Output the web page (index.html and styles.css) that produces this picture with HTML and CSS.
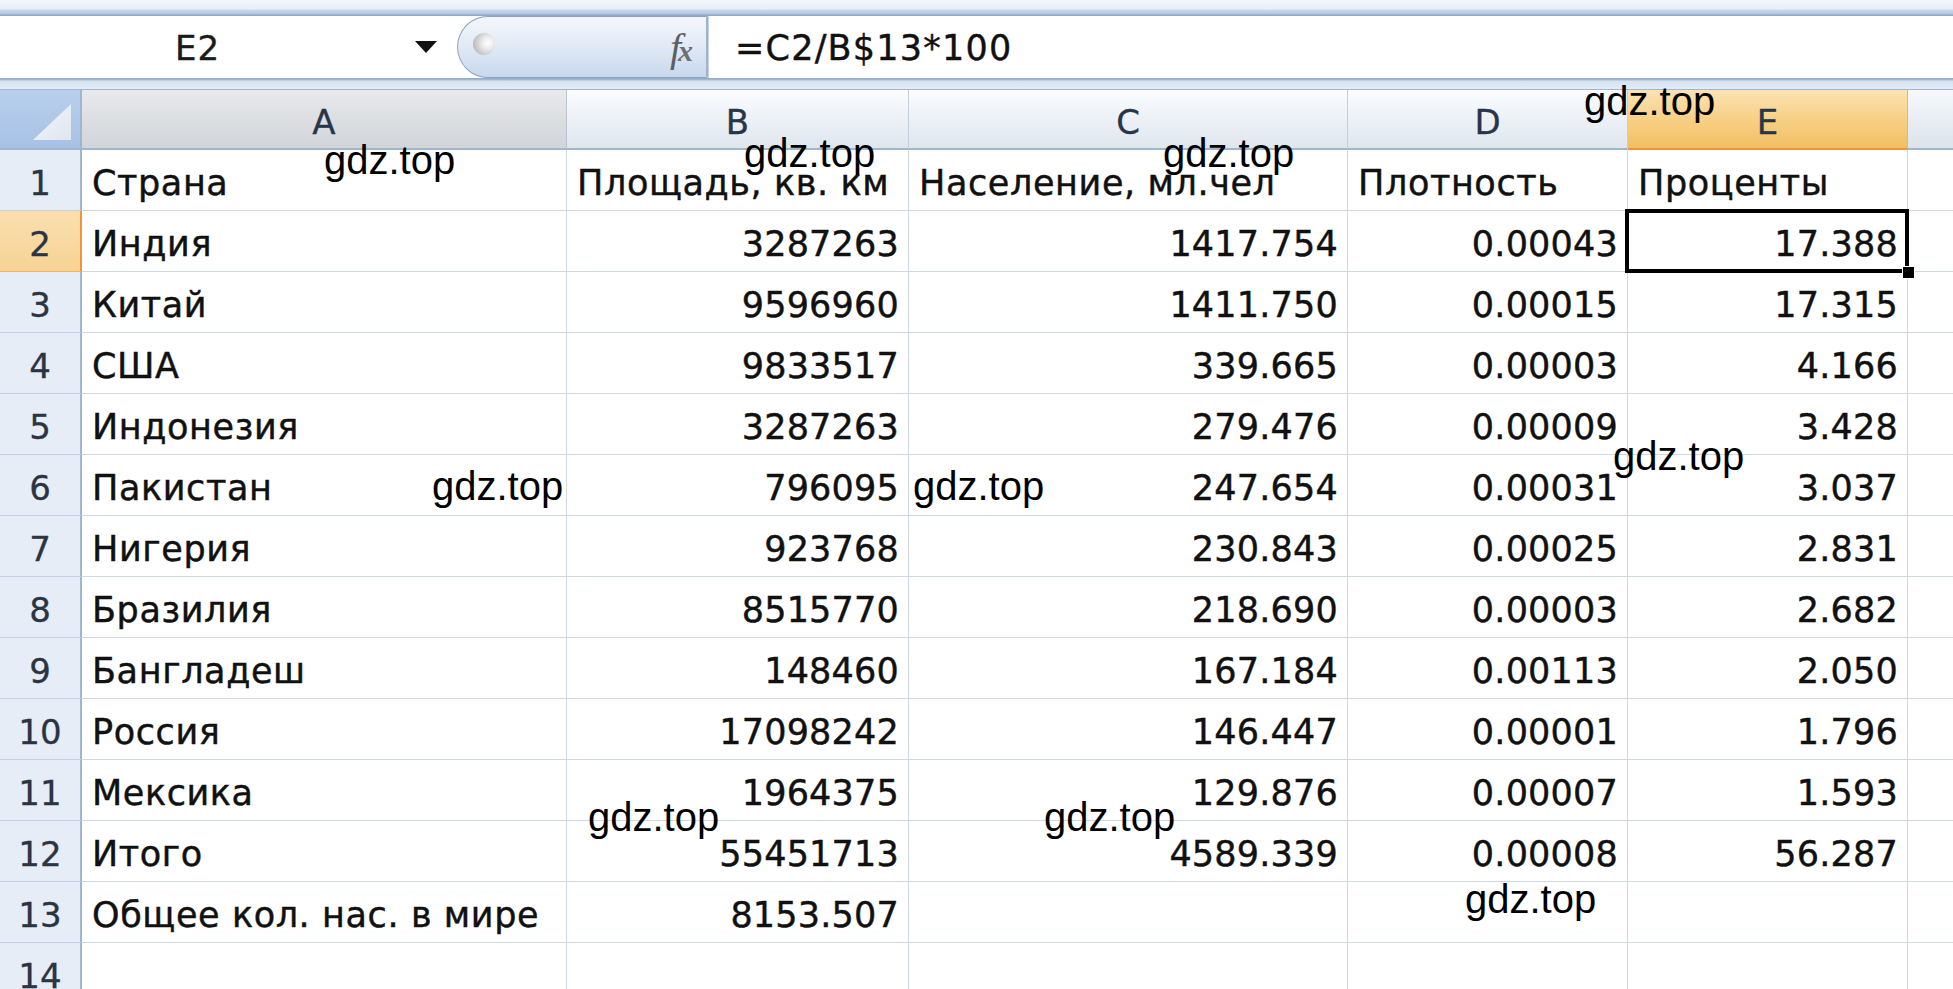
FILE: index.html
```html
<!DOCTYPE html>
<html lang="ru">
<head>
<meta charset="utf-8">
<title>Excel</title>
<link rel="stylesheet" href="styles.css">
</head>
<body>
<div class="app">
  <div class="topband"></div>
  <div class="fbar">
    <div class="namebox"><span class="ref">E2</span><span class="dd"></span></div>
    <div class="pill"><span class="ball"></span><span class="fx"><i>f</i><i class="x">x</i></span></div>
    <div class="formula">=C2/B$13*100</div>
  </div>
  <div class="sep"></div>
  <div class="sheet">
    <div class="corner"></div>
    <div class="ch cha">A</div>
    <div class="ch">B</div>
    <div class="ch">C</div>
    <div class="ch">D</div>
    <div class="ch chsel">E</div>
    <div class="ch chf"></div>

    <div class="rh">1</div><div class="c">Страна</div><div class="c">Площадь, кв. км</div><div class="c">Население, мл.чел</div><div class="c">Плотность</div><div class="c">Проценты</div><div class="c f"></div>
    <div class="rh rhsel">2</div><div class="c">Индия</div><div class="c n">3287263</div><div class="c n">1417.754</div><div class="c n">0.00043</div><div class="c n sel">17.388</div><div class="c f"></div>
    <div class="rh">3</div><div class="c">Китай</div><div class="c n">9596960</div><div class="c n">1411.750</div><div class="c n">0.00015</div><div class="c n">17.315</div><div class="c f"></div>
    <div class="rh">4</div><div class="c">США</div><div class="c n">9833517</div><div class="c n">339.665</div><div class="c n">0.00003</div><div class="c n">4.166</div><div class="c f"></div>
    <div class="rh">5</div><div class="c">Индонезия</div><div class="c n">3287263</div><div class="c n">279.476</div><div class="c n">0.00009</div><div class="c n">3.428</div><div class="c f"></div>
    <div class="rh">6</div><div class="c">Пакистан</div><div class="c n">796095</div><div class="c n">247.654</div><div class="c n">0.00031</div><div class="c n">3.037</div><div class="c f"></div>
    <div class="rh">7</div><div class="c">Нигерия</div><div class="c n">923768</div><div class="c n">230.843</div><div class="c n">0.00025</div><div class="c n">2.831</div><div class="c f"></div>
    <div class="rh">8</div><div class="c">Бразилия</div><div class="c n">8515770</div><div class="c n">218.690</div><div class="c n">0.00003</div><div class="c n">2.682</div><div class="c f"></div>
    <div class="rh">9</div><div class="c">Бангладеш</div><div class="c n">148460</div><div class="c n">167.184</div><div class="c n">0.00113</div><div class="c n">2.050</div><div class="c f"></div>
    <div class="rh">10</div><div class="c">Россия</div><div class="c n">17098242</div><div class="c n">146.447</div><div class="c n">0.00001</div><div class="c n">1.796</div><div class="c f"></div>
    <div class="rh">11</div><div class="c">Мексика</div><div class="c n">1964375</div><div class="c n">129.876</div><div class="c n">0.00007</div><div class="c n">1.593</div><div class="c f"></div>
    <div class="rh">12</div><div class="c">Итого</div><div class="c n">55451713</div><div class="c n">4589.339</div><div class="c n">0.00008</div><div class="c n">56.287</div><div class="c f"></div>
    <div class="rh">13</div><div class="c">Общее кол. нас. в мире</div><div class="c n">8153.507</div><div class="c n"></div><div class="c n"></div><div class="c n"></div><div class="c f"></div>
    <div class="rh">14</div><div class="c"></div><div class="c"></div><div class="c"></div><div class="c"></div><div class="c"></div><div class="c f"></div>
  </div>

  <span class="wm wm1">gdz.top</span>
  <span class="wm wm2">gdz.top</span>
  <span class="wm wm3">gdz.top</span>
  <span class="wm wm4">gdz.top</span>
  <span class="wm wm5">gdz.top</span>
  <span class="wm wm6">gdz.top</span>
  <span class="wm wm7">gdz.top</span>
  <span class="wm wm8">gdz.top</span>
  <span class="wm wm9">gdz.top</span>
  <span class="wm wm10">gdz.top</span>
</div>
</body>
</html>
```

FILE: styles.css
```css
html, body {
  margin: 0;
  padding: 0;
  background: #ffffff;
  overflow: hidden;
}

.app {
  position: relative;
  width: 1953px;
  height: 989px;
  overflow: hidden;
  font-family: "DejaVu Sans", "Noto Sans", sans-serif;
  color: #111;
}

.topband {
  height: 16px;
  background: linear-gradient(to bottom, #f3f7fc 0, #e7eef8 9px, #cbd9ec 10px, #b2c5df 14px, #8ea7c7 15px, #8ea7c7 16px);
}

.fbar {
  display: flex;
  height: 62px;
  background: #fff;
}

.namebox {
  width: 457px;
  display: flex;
  align-items: center;
  box-sizing: border-box;
}

.ref {
  margin-left: 175px;
  font-size: 34px;
  letter-spacing: 1px;
  color: #1a1a1a;
  padding-top: 2px;
  -webkit-text-stroke: 0.4px #1a1a1a;
}

.dd {
  margin-left: auto;
  margin-right: 20px;
  width: 0;
  height: 0;
  border-left: 11px solid transparent;
  border-right: 11px solid transparent;
  border-top: 12px solid #111;
}

.pill {
  width: 251px;
  box-sizing: border-box;
  display: flex;
  align-items: center;
  justify-content: space-between;
  padding: 0 16px 0 15px;
  border: 1px solid #8aa2c2;
  border-right: 2px solid #9fb3cd;
  border-radius: 34px 0 0 34px;
  background: linear-gradient(to bottom, #f4f7fc 0%, #e3ebf6 45%, #c8d8ed 100%);
}

.ball {
  width: 22px;
  height: 22px;
  border-radius: 50%;
  background: radial-gradient(circle at 68% 45%, #ffffff 0, #ececec 30%, #bdbdbd 75%, #9c9c9c 100%);
  margin-top: -6px;
}

.fx {
  font-family: "Liberation Serif", "DejaVu Serif", serif;
  font-size: 40px;
  color: #5b5f66;
  display: flex;
  align-items: baseline;
  letter-spacing: -3px;
}

.fx .x {
  font-size: 30px;
  font-weight: bold;
  color: #6b7077;
}

.formula {
  flex: 1;
  display: flex;
  align-items: center;
  padding-left: 26px;
  border-left: 1px solid #c6d3e4;
  font-size: 35px;
  letter-spacing: 1.2px;
  color: #111;
  padding-top: 2px;
  -webkit-text-stroke: 0.4px #111;
}

.sep {
  height: 12px;
  background: linear-gradient(to bottom, #8ea7c7 0, #a9bcd5 2px, #d6e2f1 3px, #e3ecf7 11px, #9eb6ce 11px);
}

.sheet {
  display: grid;
  grid-template-columns: 82px 485px 342px 439px 280px 280px 1fr;
  grid-template-rows: 60px;
  grid-auto-rows: 61px;
}

.corner {
  position: relative;
  background: linear-gradient(to bottom, #b9cfec, #a7c2e6);
  border-right: 2px solid #9eb6ce;
  border-bottom: 2px solid #9eb6ce;
  box-sizing: border-box;
}

.corner::after {
  content: "";
  position: absolute;
  left: 33px;
  top: 14px;
  width: 38px;
  height: 36px;
  background: linear-gradient(135deg, #f3f6fa 0%, #dfe6ef 100%);
  clip-path: polygon(100% 0, 100% 100%, 0 100%);
}

.ch {
  display: flex;
  align-items: center;
  justify-content: center;
  padding-top: 6px;
  box-sizing: border-box;
  font-size: 34px;
  color: #27354a;
  -webkit-text-stroke: 0.3px #27354a;
  background: linear-gradient(to bottom, #fbfcfe 0%, #eef2f7 45%, #dfe6ee 100%);
  border-right: 1px solid #c3cfdd;
  border-bottom: 2px solid #9eb6ce;
}

.cha {
  background: linear-gradient(to bottom, #e9eaec 0%, #dcdee1 50%, #d1d5da 100%);
  border-right: 1px solid #bcc5cf;
}

.chsel {
  background: linear-gradient(to bottom, #fbe3b4 0%, #f8d28a 45%, #f1bf62 100%);
  border-right: 1px solid #f2b35a;
  border-bottom: 2px solid #f29436;
}

.chf {
  background: linear-gradient(to bottom, #f6f8fb 0%, #e9eef4 50%, #dce3eb 100%);
  border-right: none;
}

.rh {
  display: flex;
  align-items: center;
  justify-content: center;
  padding-top: 5px;
  box-sizing: border-box;
  font-size: 34px;
  color: #2a3442;
  -webkit-text-stroke: 0.3px #2a3442;
  background: #e6edf7;
  border-right: 2px solid #9eb6ce;
  border-bottom: 1px solid #c5d2e3;
}

.rhsel {
  background: linear-gradient(to bottom, #fadfae 0%, #f7d395 100%);
  border-right: 2px solid #f29436;
  border-bottom: 1px solid #f2b35a;
}

.c {
  display: flex;
  align-items: center;
  padding: 5px 10px 0 10px;
  box-sizing: border-box;
  font-size: 35px;
  letter-spacing: 0.6px;
  white-space: nowrap;
  overflow: visible;
  color: #111;
  -webkit-text-stroke: 0.45px #111;
  background: #fff;
  border-right: 1px solid #d0d7e5;
  border-bottom: 1px solid #d0d7e5;
}

.n {
  justify-content: flex-end;
  padding-right: 9px;
  letter-spacing: 0.2px;
}

.f {
  border-right: none;
}

.sel {
  position: relative;
  z-index: 2;
}

.sel::after {
  content: "";
  position: absolute;
  left: -3px;
  top: -2px;
  right: -2px;
  bottom: -2px;
  border: 4px solid #000;
}

.sel::before {
  content: "";
  position: absolute;
  right: -8px;
  bottom: -8px;
  width: 11px;
  height: 11px;
  background: #000;
  border: 1px solid #fff;
  z-index: 3;
}

.wm {
  position: absolute;
  z-index: 10;
  font-family: "Liberation Sans", Arial, sans-serif;
  font-size: 40px;
  line-height: 40px;
  color: #000;
  white-space: nowrap;
}

.wm1 { left: 324px; top: 140px; }
.wm2 { left: 744px; top: 133px; }
.wm3 { left: 1163px; top: 133px; }
.wm4 { left: 1584px; top: 81px; }
.wm5 { left: 432px; top: 466px; }
.wm6 { left: 913px; top: 466px; }
.wm7 { left: 1613px; top: 436px; }
.wm8 { left: 588px; top: 797px; }
.wm9 { left: 1044px; top: 797px; }
.wm10 { left: 1465px; top: 879px; }
```
